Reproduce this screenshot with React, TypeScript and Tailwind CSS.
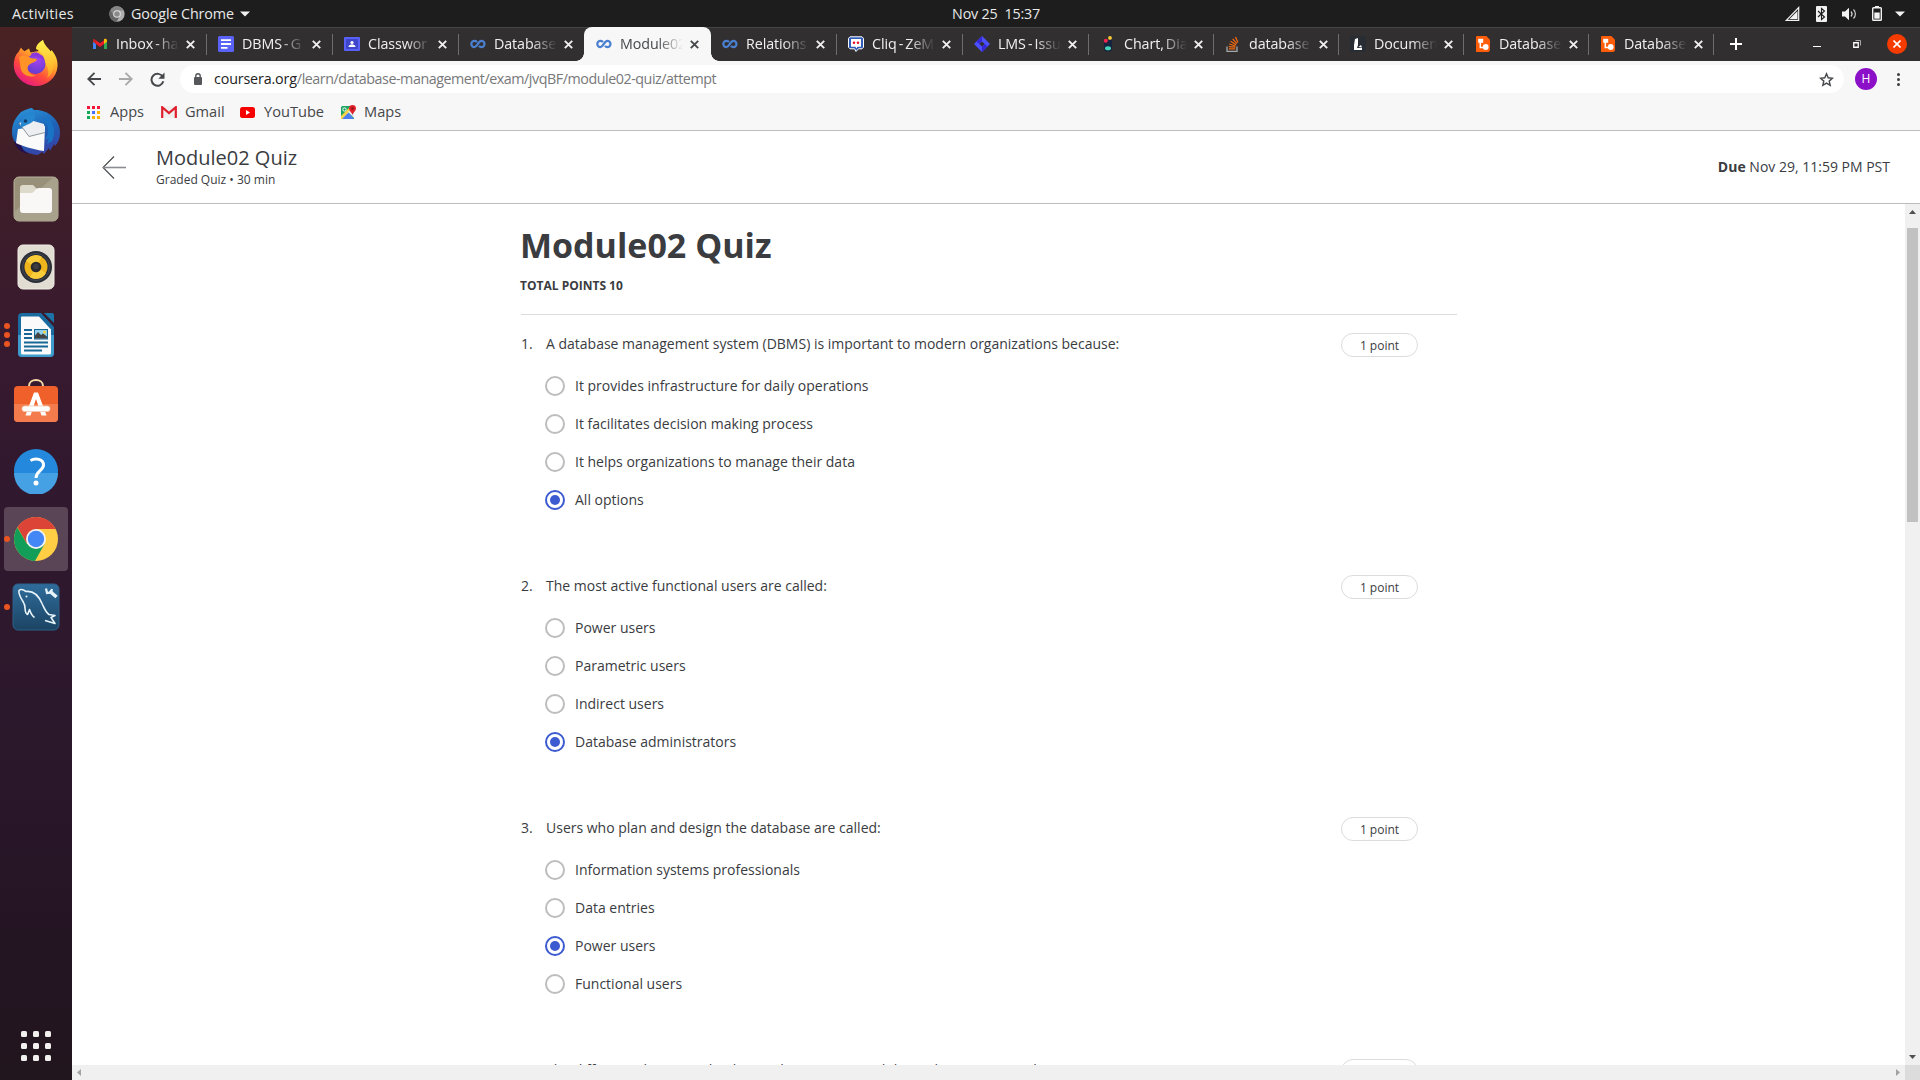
import React from 'react';
import type { ReactNode } from 'react';

/* ---------- favicons ---------- */

const GmailIcon = () => (
  <svg width="16" height="16" viewBox="0 0 16 16">
    <path d="M1 4v9h3V7z" fill="#4285f4" />
    <path d="M15 4v9h-3V7z" fill="#34a853" />
    <path d="M12 4.200V8l3-2.300V4.500C15 2.900 13.200 2.300 12 3.200z" fill="#fbbc04" />
    <path d="M4 8V4.200L8 7.200l4-3V8l-4 3z" fill="#ea1c2c" />
    <path d="M1 4.500V5.700L4 8V4.200l-1-.8C2 2.700 1 3.400 1 4.500z" fill="#c5221f" />
  </svg>
);

const FormsIcon = () => (
  <svg width="16" height="16" viewBox="0 0 16 16">
    <rect width="16" height="16" rx="1.500" fill="#5b63f7" />
    <path d="M3 4.200h10M3 8h10M3 11.800h6.500" stroke="#fff" strokeWidth="1.800" />
  </svg>
);

const ClassroomIcon = () => (
  <svg width="16" height="16" viewBox="0 0 16 16">
    <rect y="1" width="16" height="14" rx="1" fill="#5a5ff5" />
    <rect x="2" y="3" width="12" height="10" fill="#3d45c9" />
    <circle cx="8" cy="6.500" r="1.600" fill="#fff" />
    <path d="M4.500 11c0-1.800 2-2.400 3.500-2.400s3.500.6 3.500 2.400z" fill="#fff" />
  </svg>
);

const CourseraIcon = () => (
  <svg width="16" height="16" viewBox="0 0 16 16">
    <path
      d="M7 6C6 5 5.300 4.900 4.400 4.900a3.100 3.100 0 0 0 0 6.200C7.500 11.100 8 4.900 11.400 4.900a3.100 3.100 0 0 1 0 6.200C10.300 11.100 9.700 10.800 8.900 10"
      fill="none"
      stroke="#4a80cf"
      strokeWidth="2.200"
    />
  </svg>
);

const CliqIcon = () => (
  <svg width="16" height="16" viewBox="0 0 16 16">
    <path d="M2 .8h12l1.500 1.500v9L14 12.800h-3.500L8 15.500l-1.500-2.700H2L.5 11.300v-9z" fill="#2f5bb8" stroke="#fff" strokeWidth="1" />
    <path d="M3 3h10v7.800H9.500L8.300 12.500 7.500 10.800H3z" fill="#fff" />
    <circle cx="6" cy="6.700" r="1.300" fill="#e8112d" />
    <circle cx="10" cy="6.700" r="1.300" fill="#e8112d" />
  </svg>
);

const JiraIcon = () => (
  <svg width="16" height="16" viewBox="0 0 16 16">
    <path d="M8 0l8 8-8 8-8-8z" fill="#4b50fb" />
    <path d="M8 0v5.200L5.200 8 2.500 5.500zM8 16v-5.200L10.800 8l2.700 2.500z" fill="#3526d8" />
    <path d="M8 5.400L10.600 8 8 10.600 5.400 8z" fill="#322f30" />
  </svg>
);

const CreatelyIcon = () => (
  <svg width="16" height="16" viewBox="0 0 16 16">
    <path d="M4 5l8-2v9l-1 3.500H5L4 12z" fill="#15233f" />
    <circle cx="5.800" cy="4.800" r="2" fill="#f7264f" />
    <circle cx="10" cy="1.900" r="1.900" fill="#fbca35" />
    <ellipse cx="8" cy="12.200" rx="3" ry="2" fill="#45d3b8" />
  </svg>
);

const StackIcon = () => (
  <svg width="16" height="16" viewBox="0 0 16 16">
    <path d="M2 10.500v4.800h10v-4.800" fill="none" stroke="#a5a7a9" strokeWidth="1.300" />
    <path d="M3.800 12.900h6.500M3.800 10.600l6.600.6M4.300 8l6.300 2M5.500 5.300l5.600 3.500M7.700 2.800l4.200 4.900M10.500 1l2.400 5.500" stroke="#f26a10" strokeWidth="1.300" />
  </svg>
);

const BookMarkIcon = () => (
  <svg width="16" height="16" viewBox="0 0 16 16">
    <rect width="16" height="16" rx="1" fill="#282c33" />
    <path d="M5 3l3-1v7l-1 3h5v2H4V9z" fill="#fff" />
    <path d="M8.500 11l2.500-2 1 2.500z" fill="#fff" />
  </svg>
);

const LucidchartIcon = () => (
  <svg width="16" height="16" viewBox="0 0 16 16">
    <path d="M1.500 0h9.800L15 3.700V14.500L13.500 16h-12L1 15.500V.5z" fill="#ff5d0a" />
    <path d="M3.200 2.800h5v4h-5z" fill="#fff" />
    <path d="M5.300 6v5.500h4" fill="none" stroke="#fff" strokeWidth="1.500" />
    <circle cx="10.700" cy="11" r="2.900" fill="#fff" />
  </svg>
);

/* ---------- tab strip ---------- */

type Tab = { title: string; icon: ReactNode; active?: boolean; narrow?: boolean; sep?: boolean };

const tabs: Tab[] = [
  { title: 'Inbox - ha', icon: <GmailIcon />, sep: true },
  { title: 'DBMS - G', icon: <FormsIcon />, sep: true },
  { title: 'Classwor', icon: <ClassroomIcon />, sep: true },
  { title: 'Database', icon: <CourseraIcon /> },
  { title: 'Module02', icon: <CourseraIcon />, active: true },
  { title: 'Relations', icon: <CourseraIcon />, sep: true },
  { title: 'Cliq - ZeM', icon: <CliqIcon />, sep: true },
  { title: 'LMS - Issu', icon: <JiraIcon />, sep: true },
  { title: 'Chart, Dia', icon: <CreatelyIcon />, narrow: true, sep: true },
  { title: 'database', icon: <StackIcon />, narrow: true, sep: true },
  { title: 'Documen', icon: <BookMarkIcon />, narrow: true, sep: true },
  { title: 'Database', icon: <LucidchartIcon />, narrow: true, sep: true },
  { title: 'Database', icon: <LucidchartIcon />, narrow: true, sep: true },
];

const TabItem = ({ tab }: { tab: Tab }) => (
  <div
    className={`relative flex h-[34px] shrink-0 items-center ${tab.narrow ? 'w-[125px]' : tab.active ? '-ml-px w-[127px]' : 'w-[126px]'} ${
      tab.active ? 'rounded-t-lg bg-[#f7f7f7] pl-3 text-[#45474a]' : 'pl-[11px] text-[#f0f0f0]'
    }`}
  >
    {tab.active && (
      <>
        <span className="absolute bottom-0 -left-2 h-2 w-2 bg-[radial-gradient(circle_at_0_0,transparent_7.5px,#f7f7f7_8px)]" />
        <span className="absolute -right-2 bottom-0 h-2 w-2 bg-[radial-gradient(circle_at_100%_0,transparent_7.5px,#f7f7f7_8px)]" />
      </>
    )}
    <span className="h-4 w-4 shrink-0">{tab.icon}</span>
    <span className="ml-2 w-[63px] overflow-hidden text-[14.3px] leading-5 tracking-[-0.1px] whitespace-nowrap [mask-image:linear-gradient(to_right,#000_60%,transparent_100%)] [word-spacing:-1.5px]">
      {tab.title}
    </span>
    <svg width="9" height="9" viewBox="0 0 9 9" className="ml-[7px] shrink-0">
      <path d="M.8.8l7.400 7.400M8.200.8L.8 8.200" stroke="currentColor" strokeWidth="1.900" />
    </svg>
    {tab.sep && <span className="absolute top-[7px] right-0 h-[21px] w-px bg-[#6e6c6d]" />}
  </div>
);

/* ---------- dock icons ---------- */

const Firefox = () => (
  <svg width="46" height="48" viewBox="0 0 46 48">
    <defs>
      <linearGradient id="ff1" x1=".8" y1=".1" x2=".25" y2="1">
        <stop offset="0" stopColor="#fff044" />
        <stop offset=".35" stopColor="#ffa52a" />
        <stop offset=".65" stopColor="#ff4a3c" />
        <stop offset="1" stopColor="#e31587" />
      </linearGradient>
      <linearGradient id="ff2" x1=".5" y1="0" x2=".5" y2="1">
        <stop offset="0" stopColor="#fff44f" />
        <stop offset="1" stopColor="#ffa020" />
      </linearGradient>
      <radialGradient id="ff3" cx=".6" cy=".3" r=".8">
        <stop offset="0" stopColor="#a442f0" />
        <stop offset="1" stopColor="#5a3cc9" />
      </radialGradient>
    </defs>
    <path d="M8 8.500c1 1.800 2.300 2.900 3.600 3.700L16 9.500l1.500 4 8-1.500C24 8 27 3.500 30 1c.8 5 5 7.500 7.500 11.500l1-1.500c4.500 5 6.500 11 6 16.500-1 11.500-10.500 19.500-21.500 19.500S1 38 .8 26.500C.7 20 3 15 5.500 13z" fill="url(#ff1)" />
    <path d="M23 10c0-4 4-7.500 7-9 .8 5 5 7.500 7.500 11.500C43 21 42 34 34 39c3-5 1-12-3-15 1-6-3-12-8-14z" fill="url(#ff2)" />
    <circle cx="22.500" cy="25" r="10" fill="url(#ff3)" />
    <path d="M6 18c4-2.500 9-1 12 1 2.500 1 5 0 6 1.500-1 3-6 3-8.500 6-3 4 2 10 8 10-8 3-15-1-16-8z" fill="#ff9328" />
    <path d="M18 15c3-2 7-2 9 .5 3 .5 4 3 4.500 6-3-3-8-4-13-5z" fill="#8b35dc" />
  </svg>
);

const Thunderbird = () => (
  <svg width="48" height="48" viewBox="0 0 48 48">
    <defs>
      <linearGradient id="tb1" x1=".3" y1="0" x2=".7" y2="1">
        <stop offset="0" stopColor="#2a8fd6" />
        <stop offset=".5" stopColor="#1d62b6" />
        <stop offset="1" stopColor="#3a3fa5" />
      </linearGradient>
    </defs>
    <path d="M9 5c4-2 9-4 11-4l2 2c13-1 26 9 26 22 0 7-2 11-5 14l-1-2-4 7-1-3-5 6-2-2-4 3C12 47 0 38 0 25 0 16 4 10 9 5z" fill="url(#tb1)" />
    <path d="M2 34c2 8 8 12 15 13-4-2-7-5-8-9z" fill="#24104f" />
    <path d="M6 22l27-3-1 25C22 43 8 38 4 36z" fill="#fafafa" />
    <path d="M7 16L17 29.500l16-4L32 17 18 13z" fill="#eceef1" />
    <path d="M7 16l10 13.500 16-4" fill="none" stroke="#8d979d" strokeWidth="1" />
    <path d="M9 20C8 13 13 7 22 6c3 4 0 9-5 11-4 1.500-5 3-8 3z" fill="#2587cf" />
    <path d="M31 13c6 5 7 12 2 20l4-2-2 6 5-3c4-9 2-17-4-24z" fill="#1a73c4" />
    <circle cx="13.500" cy="14" r="1.800" fill="#163b66" />
  </svg>
);

const Files = () => (
  <svg width="46" height="46" viewBox="0 0 46 46">
    <rect x="1" y="1" width="44" height="44" rx="5" fill="#989079" stroke="#b9b29c" />
    <path d="M40 1.500h1a4 4 0 0 1 4 4V40a5 5 0 0 1-5 5H6a5 5 0 0 1-5-5v-4z" fill="#a8a18c" />
    <path d="M7 12a3 3 0 0 1 3-3h10l4 4-3 6H7z" fill="#dedacb" />
    <path d="M7 17h11c2 0 3-1 4-2.500.8-1.500 2-2.500 4-2.500h10a3 3 0 0 1 3 3v19a3 3 0 0 1-3 3H10a3 3 0 0 1-3-3z" fill="#f9f8f7" />
  </svg>
);

const Rhythmbox = () => (
  <svg width="38" height="46" viewBox="0 0 38 46">
    <rect x="1" y="1" width="36" height="44" rx="5" fill="#e2ddd2" stroke="#f0ede6" />
    <circle cx="19" cy="23" r="16" fill="#2b2f38" />
    <circle cx="19" cy="23" r="13.500" fill="none" stroke="#454a54" strokeWidth="1" />
    <circle cx="19" cy="23" r="11.500" fill="#efb51c" />
    <path d="M19 23L9 17a11.500 11.500 0 0 1 16-4.300zM19 23l10 6a11.500 11.500 0 0 1-16 4.300z" fill="#f9cd3a" />
    <circle cx="19" cy="23" r="5.300" fill="#2b2b2e" />
    <circle cx="19" cy="22.500" r="2.800" fill="#3d3e42" />
  </svg>
);

const Writer = () => (
  <svg width="38" height="46" viewBox="0 0 38 46">
    <path d="M5 1h19l13 14v26a4 4 0 0 1-4 4H5a4 4 0 0 1-4-4V5a4 4 0 0 1 4-4z" fill="#1a6ba0" />
    <path d="M1 23h36v18a4 4 0 0 1-4 4H5a4 4 0 0 1-4-4z" fill="#3d9ccc" />
    <path d="M27 1h8a2 2 0 0 1 2 2v8z" fill="#1c73a8" />
    <path d="M5 4.500h17l12 13V41a1.500 1.500 0 0 1-1.500 1.500h-27A1.500 1.500 0 0 1 4 41V5.500a1 1 0 0 1 1-1z" fill="#fafafa" />
    <path d="M7 18h8M7 22h8M7 26h8M7 30.500h24M7 34.500h24M7 38.500h18" stroke="#166796" strokeWidth="1.800" />
    <rect x="17.500" y="17.500" width="13" height="9.500" fill="#8fd0ee" stroke="#166796" />
    <path d="M18 26.500v-3l3-3.500 3 3 2-1.500 4 3v2z" fill="#444" />
    <circle cx="27.500" cy="20" r="1.500" fill="#f5d13a" />
  </svg>
);

const Software = () => (
  <svg width="46" height="46" viewBox="0 0 46 46" className="relative -top-px">
    <path d="M16 9V7c0-8 14-8 14 0v2" fill="none" stroke="#f7d9a8" strokeWidth="2" />
    <rect x="1" y="7" width="44" height="36" rx="4" fill="#f0602a" />
    <path d="M1 25h44v14a4 4 0 0 1-4 4H5a4 4 0 0 1-4-4z" fill="#f47c4c" />
    <path d="M12.500 36.500L21 13.500h4l8.500 23h-5L23 20l-5.500 16.500z" fill="#fff" />
    <rect x="9" y="27" width="28" height="5.500" rx="2.500" fill="#fff" stroke="#f5c8b2" strokeWidth=".8" />
  </svg>
);

const Help = () => (
  <svg width="46" height="46" viewBox="0 0 46 46">
    <circle cx="23" cy="23" r="22" fill="#2488dc" />
    <path d="M1 25a22 22 0 0 0 44 0z" fill="#45a0e4" />
    <path d="M17.500 12.500c5-3 13-1.500 13 4.500 0 5.500-7.500 6-7.500 13" fill="none" stroke="#fff" strokeWidth="3" />
    <circle cx="23" cy="35" r="2.500" fill="#fff" />
  </svg>
);

const Chrome = () => (
  <svg width="46" height="46" viewBox="0 0 46 46">
    <circle cx="23" cy="23" r="22" fill="#ffce44" />
    <path d="M23 13h19.600A22 22 0 0 0 4.500 11.200L14 28z" fill="#db4437" />
    <path d="M4.300 11.500A22 22 0 0 0 22 45l9.800-17.500L14 28z" fill="#129d58" />
    <circle cx="23" cy="23" r="10" fill="#f3f3f3" />
    <circle cx="23" cy="23" r="8.200" fill="#4386f5" />
  </svg>
);

const Workbench = () => (
  <svg width="48" height="48" viewBox="0 0 48 48">
    <defs>
      <linearGradient id="wb" x1="0" y1="0" x2="0" y2="1">
        <stop offset="0" stopColor="#2f6c9b" />
        <stop offset="1" stopColor="#1c4463" />
      </linearGradient>
    </defs>
    <rect x="1" y="1" width="46" height="46" rx="5" fill="url(#wb)" stroke="#2c618a" />
    <path
      d="M22.500 34.500c-3-2-4-5-5-8-1 2-1 4-2 5-4-2-1-8-4-12C9 15 6 11 7 7.500c2-2 5-.5 7 1 8-1 13 5 16 12 2 4 3 8 7 11l6 1-4 2 4 6-10-3"
      fill="none"
      stroke="#e6f3fb"
      strokeWidth="1.600"
      strokeLinejoin="round"
    />
    <circle cx="14.500" cy="13.500" r="1" fill="#e6f3fb" />
    <path d="M37.500 8l7 6" stroke="#e6f3fb" strokeWidth="3.600" />
    <path d="M34 5.500l1 4.500 4-.5 1-3.500" fill="none" stroke="#e6f3fb" strokeWidth="2.200" />
  </svg>
);

const dock: { icon: ReactNode; dots?: number; active?: boolean }[] = [
  { icon: <Firefox /> },
  { icon: <Thunderbird /> },
  { icon: <Files /> },
  { icon: <Rhythmbox /> },
  { icon: <Writer />, dots: 3 },
  { icon: <Software /> },
  { icon: <Help /> },
  { icon: <Chrome />, dots: 1, active: true },
  { icon: <Workbench />, dots: 1 },
];

const Dock = () => (
  <aside className="flex w-[72px] shrink-0 flex-col justify-between bg-[linear-gradient(to_bottom,#4a2224_0%,#3f1e29_15%,#381a2f_30%,#30182e_45%,#2c182c_65%,#241523_88%,#21151d_100%)] pt-0.5 pb-[19px]">
    <div>
      {dock.map((d, i) => (
        <div key={i} className="relative flex h-[68px] items-center justify-center px-1 py-0.5">
          <div className={`flex h-16 w-16 items-center justify-center rounded ${d.active ? 'bg-[#5a4557]' : ''}`}>{d.icon}</div>
          {d.dots && (
            <div className="absolute inset-y-0 left-1 flex flex-col justify-center gap-[3px]">
              {Array.from({ length: d.dots }, (_, k) => (
                <span key={k} className="h-1.5 w-1.5 rounded-full bg-[#e95420]" />
              ))}
            </div>
          )}
        </div>
      ))}
    </div>
    <div className="ml-[21px] grid w-[30px] grid-cols-3 gap-1.5">
      {Array.from({ length: 9 }, (_, k) => (
        <span key={k} className="h-1.5 w-1.5 rounded-[1.5px] bg-[#f2f0ee]" />
      ))}
    </div>
  </aside>
);

/* ---------- system bar ---------- */

const TopBar = () => (
  <header className="grid h-[27px] shrink-0 grid-cols-[1fr_auto_1fr] items-center bg-[#1d1d1d] text-[14.3px] text-[#e9e9e9]">
    <div className="flex items-center pl-3">
      <span className="w-[97px] tracking-[0.3px]">Activities</span>
      <svg width="16" height="16" viewBox="0 0 46 46">
        <circle cx="23" cy="23" r="22" fill="#b0b0b0" />
        <path d="M23 13h19.600A22 22 0 0 0 4.500 11.200L14 28z" fill="#858585" />
        <path d="M4.300 11.500A22 22 0 0 0 22 45l9.800-17.500L14 28z" fill="#666" />
        <circle cx="23" cy="23" r="11" fill="#e0e0e0" />
        <circle cx="23" cy="23" r="8" fill="#8a8a8a" />
      </svg>
      <span className="ml-1.5 tracking-[-0.1px]">Google Chrome</span>
      <svg width="10" height="6" viewBox="0 0 10 6" className="ml-1.5">
        <path d="M0 .5h10L5 5.500z" fill="#f2f2f2" />
      </svg>
    </div>
    <div className="relative left-[36px] tracking-[-0.2px] whitespace-pre">Nov 25  15:37</div>
    <div className="flex items-center justify-end pr-[15px]">
      <svg width="15" height="15" viewBox="0 0 15 15">
        <path d="M1.300 14.300L13.700 1.500v12.800z" fill="none" stroke="#f2f2f2" strokeWidth="1.200" />
        <path d="M4.500 13L12.500 5v8z" fill="#f2f2f2" />
      </svg>
      <svg width="11" height="16" viewBox="0 0 11 16" className="ml-4">
        <rect width="11" height="16" rx="1" fill="#f2f2f2" />
        <path d="M2 5l6.500 6L5.500 13.500v-11L8.500 5 2 11" fill="none" stroke="#1d1d1d" strokeWidth="1.100" />
      </svg>
      <svg width="15" height="14" viewBox="0 0 15 14" className="ml-[15px]">
        <path d="M0 4.500h3L7 .8v12.400L3 9.500H0z" fill="#f2f2f2" />
        <path d="M9 4.500c1.300 1.500 1.300 3.500 0 5M11.500 2.500c2.500 2.500 2.500 6.500 0 9" fill="none" stroke="#cfcfcf" strokeWidth="1.200" />
      </svg>
      <svg width="10" height="15" viewBox="0 0 10 15" className="ml-[15px]">
        <path d="M3 0h4v1.500H3z" fill="#f2f2f2" />
        <rect x=".7" y="1.700" width="8.600" height="12.600" rx=".8" fill="none" stroke="#f2f2f2" strokeWidth="1.400" />
        <path d="M2.300 6.500h5.400v6.200H2.300z" fill="#f2f2f2" />
      </svg>
      <svg width="10" height="6" viewBox="0 0 10 6" className="ml-[13px]">
        <path d="M0 .5h10L5 5.500z" fill="#f2f2f2" />
      </svg>
    </div>
  </header>
);

/* ---------- browser chrome ---------- */

const TabStrip = () => (
  <div className="flex h-[34px] shrink-0 items-center bg-[#322f30] pl-[9px] shadow-[inset_0_1px_0_#464344]">
    {tabs.map((t, i) => (
      <TabItem key={i} tab={t} />
    ))}
    <svg width="12" height="12" viewBox="0 0 12 12" className="ml-4 text-white">
      <path d="M6 0v12M0 6h12" stroke="currentColor" strokeWidth="2" />
    </svg>
    <div className="ml-auto flex items-center pr-[13px]">
      <span className="mt-1 h-px w-2 bg-white" />
      <svg width="8" height="8" viewBox="0 0 8 8" className="ml-8">
        <path d="M.75 2.750h4.500v4.500H.750z" fill="none" stroke="#fff" strokeWidth="1.300" />
        <path d="M2.500.5h5v5" fill="none" stroke="#aaa" strokeWidth="1" />
      </svg>
      <span className="ml-[26px] flex h-5 w-5 items-center justify-center rounded-full bg-[#f53b00]">
        <svg width="8" height="8" viewBox="0 0 8 8">
          <path d="M.5.5l7 7M7.500.5l-7 7" stroke="#fff" strokeWidth="1.600" />
        </svg>
      </span>
    </div>
  </div>
);

const Toolbar = () => (
  <div className="flex h-9 shrink-0 items-center bg-[#f7f7f7] pl-[15px] text-[#45474a]">
    <svg width="14" height="14" viewBox="0 0 14 14">
      <path d="M14 7H1.500M7.500.8L1.300 7l6.200 6.200" fill="none" stroke="currentColor" strokeWidth="1.900" />
    </svg>
    <svg width="14" height="14" viewBox="0 0 14 14" className="ml-[18px] text-[#a9a9a9]">
      <path d="M0 7h12.500M6.500.8L12.700 7l-6.200 6.200" fill="none" stroke="currentColor" strokeWidth="1.900" />
    </svg>
    <svg width="15" height="15" viewBox="0 0 15 15" className="ml-[17px]">
      <path d="M12.800 5A6 6 0 1 0 13.300 9.300" fill="none" stroke="currentColor" strokeWidth="2" />
      <path d="M14.500.5v6.200H8.300z" fill="currentColor" />
    </svg>
    <div className="ml-[15px] flex h-7 w-[1664px] items-center rounded-full bg-white pr-[10px] pl-[14px]">
      <svg width="8" height="12" viewBox="0 0 8 12">
        <path d="M1.800 5V3a2.200 2.200 0 0 1 4.400 0v2" fill="none" stroke="#55575a" strokeWidth="1.400" />
        <rect y="4" width="8" height="8" rx="1" fill="#55575a" />
      </svg>
      <span className="ml-3 text-[14.3px] tracking-[-0.455px] text-[#77787a]">
        <span className="tracking-[-0.15px] text-[#222]">coursera.org</span>/learn/database-management/exam/jvqBF/module02-quiz/attempt
      </span>
      <svg width="15" height="15" viewBox="0 0 15 15" className="ml-auto">
        <path d="M7.500 1.800l1.700 4 4.300.4-3.300 2.900 1 4.200-3.700-2.200-3.700 2.200 1-4.200L1.500 6.200l4.300-.4z" fill="none" stroke="#45474a" strokeWidth="1.400" />
      </svg>
    </div>
    <span className="ml-[11px] flex h-[22px] w-[22px] items-center justify-center rounded-full bg-[#8c10c8] text-[12px] text-white">H</span>
    <div className="ml-5 flex flex-col gap-[2px]">
      <span className="h-[3px] w-[3px] rounded-full bg-[#3c3e40]" />
      <span className="h-[3px] w-[3px] rounded-full bg-[#3c3e40]" />
      <span className="h-[3px] w-[3px] rounded-full bg-[#3c3e40]" />
    </div>
  </div>
);

const appColors = ['bg-[#f4163c]', 'bg-[#f4163c]', 'bg-[#f4163c]', 'bg-[#0fa958]', 'bg-[#4b6bfb]', 'bg-[#fdb100]', 'bg-[#0fa958]', 'bg-[#fdb100]', 'bg-[#fdb100]'];

const Bookmarks = () => (
  <div className="flex h-[34px] shrink-0 items-center border-b border-[#bcbcbc] bg-[#f7f7f7] pb-[3px] pl-[15px] text-[14.6px] text-[#45474a]">
    <div className="grid w-[13px] grid-cols-3 gap-[2px]">
      {appColors.map((c, i) => (
        <span key={i} className={`h-[3px] w-[3px] ${c}`} />
      ))}
    </div>
    <span className="ml-[10px] w-[51px]">Apps</span>
    <svg width="16" height="12" viewBox="0 0 16 12">
      <rect x="1" y=".5" width="14" height="11" rx="1" fill="#efefef" />
      <path d="M1.200 12V1.200L8 7l6.800-5.800V12" fill="none" stroke="#e0202d" strokeWidth="2.200" />
    </svg>
    <span className="ml-[8px] w-[55px]">Gmail</span>
    <svg width="15" height="11" viewBox="0 0 15 11">
      <rect width="15" height="11" rx="2.500" fill="#f80000" />
      <path d="M6 3l4 2.500L6 8z" fill="#fff" />
    </svg>
    <span className="ml-[9px] w-[77px]">YouTube</span>
    <svg width="15" height="15" viewBox="0 0 15 15">
      <path d="M1.500 1H12l1 1v12H1a1 1 0 0 1-1-1V2z" fill="#1fa463" />
      <path d="M0 14l7-7 6 7z" fill="#4c7df5" />
      <path d="M0 11l9-9 2 2L1 14H0z" fill="#fdd54c" />
      <path d="M7 7l6 6V8l-3-3z" fill="#e8eaed" />
      <path d="M11.500 0a3.500 3.500 0 0 1 3.500 3.500C15 6 12 7.500 11.500 10 11 7.500 8 6 8 3.500A3.500 3.500 0 0 1 11.500 0z" fill="#e0202d" />
      <circle cx="11.500" cy="3.500" r="1.200" fill="#8c1410" />
      <circle cx="3.500" cy="4.500" r="1.700" fill="none" stroke="#fff" />
    </svg>
    <span className="ml-[8px]">Maps</span>
  </div>
);

/* ---------- quiz page ---------- */

type Question = { text: string; options: string[]; selected: number };

const questions: Question[] = [
  {
    text: 'A database management system (DBMS) is important to modern organizations because:',
    options: [
      'It provides infrastructure for daily operations',
      'It facilitates decision making process',
      'It helps organizations to manage their data',
      'All options',
    ],
    selected: 3,
  },
  {
    text: 'The most active functional users are called:',
    options: ['Power users', 'Parametric users', 'Indirect users', 'Database administrators'],
    selected: 3,
  },
  {
    text: 'Users who plan and design the database are called:',
    options: ['Information systems professionals', 'Data entries', 'Power users', 'Functional users'],
    selected: 2,
  },
  {
    text: 'The difference between database administrator and data administrator is that:',
    options: [],
    selected: -1,
  },
];

const QuestionBlock = ({ q, n }: { q: Question; n: number }) => (
  <section className="flex h-[242px] items-start">
    <span className="w-[25px] leading-[21px]">{n}.</span>
    <div className="flex-1">
      <p className="leading-[21px]">{q.text}</p>
      <div className="mt-[13px] -ml-px">
        {q.options.map((o, i) => (
          <label key={o} className="flex h-[38px] items-center">
            <span
              className={`flex h-5 w-5 items-center justify-center rounded-full border-2 ${
                i === q.selected ? 'border-[#3d5bd0]' : 'border-[#bdbdbd]'
              }`}
            >
              {i === q.selected && <span className="h-[10px] w-[10px] rounded-full bg-[#3d5bd0]" />}
            </span>
            <span className="ml-[10px]">{o}</span>
          </label>
        ))}
      </div>
    </div>
    <span className="mr-[39px] flex h-6 w-[77px] items-center justify-center rounded-full border border-[#dcdcdc] pt-0.5 text-xs">1 point</span>
  </section>
);

const QuizHeader = () => (
  <div className="flex h-[73px] shrink-0 items-center border-b border-[#bcbcbc] bg-white pr-[30px] pl-[30px] text-[#3a3c3f]">
    <svg width="24" height="23" viewBox="0 0 24 23">
      <path d="M12 .5L1 11.500l11 11" fill="none" stroke="#45474a" strokeWidth="1.100" />
      <path d="M1 11.500h23" stroke="#8b8c91" strokeWidth="1.600" />
    </svg>
    <div className="ml-[30px]">
      <h2 className="text-xl leading-6">Module02 Quiz</h2>
      <p className="pt-px text-xs leading-[18px]">Graded Quiz • 30 min</p>
    </div>
    <p className="ml-auto text-sm">
      <strong className="font-bold">Due</strong> Nov 29, 11:59 PM PST
    </p>
  </div>
);

const Content = () => (
  <div className="flex min-h-0 flex-1 flex-col">
    <div className="flex min-h-0 flex-1">
      <main className="flex-1 overflow-hidden bg-white text-sm text-[#3a3c3f]">
        <div className="ml-[449px] w-[936px]">
          <h1 className="-ml-px pt-[17px] text-[34px] leading-[48px] font-bold">Module02 Quiz</h1>
          <p className="mt-2 -ml-px text-xs leading-[18px] font-bold">TOTAL POINTS 10</p>
          <div className="mt-[19px] border-t border-[#dcdcdc] pt-[18px]">
            {questions.map((q, i) => (
              <QuestionBlock key={q.text} q={q} n={i + 1} />
            ))}
          </div>
        </div>
      </main>
      <div className="flex w-[15px] shrink-0 flex-col items-center bg-[#f0f0f0]">
        <svg width="7" height="4" viewBox="0 0 7 4" className="mt-[6px]">
          <path d="M0 4L3.500 0 7 4z" fill="#505050" />
        </svg>
        <div className="mt-[14px] h-[294px] w-[11px] bg-[#c1c1c1]" />
        <svg width="7" height="4" viewBox="0 0 7 4" className="mt-auto mb-[6px]">
          <path d="M0 0h7L3.500 4z" fill="#505050" />
        </svg>
      </div>
    </div>
    <div className="flex h-[15px] shrink-0 items-center bg-[#f0f0f0]">
      <svg width="4" height="7" viewBox="0 0 4 7" className="ml-[5px]">
        <path d="M4 0v7L0 3.500z" fill="#a3a3a3" />
      </svg>
      <svg width="4" height="7" viewBox="0 0 4 7" className="mr-[5px] ml-auto">
        <path d="M0 0v7l4-3.500z" fill="#a3a3a3" />
      </svg>
      <span className="h-full w-[15px] bg-[#dcdcdc]" />
    </div>
  </div>
);

export default function App() {
  return (
    <div className="flex h-[1080px] w-[1920px] flex-col overflow-hidden font-['Open_Sans','Noto_Sans',sans-serif]">
      <TopBar />
      <div className="flex min-h-0 flex-1">
        <Dock />
        <div className="flex min-w-0 flex-1 flex-col">
          <TabStrip />
          <Toolbar />
          <Bookmarks />
          <QuizHeader />
          <Content />
        </div>
      </div>
    </div>
  );
}
